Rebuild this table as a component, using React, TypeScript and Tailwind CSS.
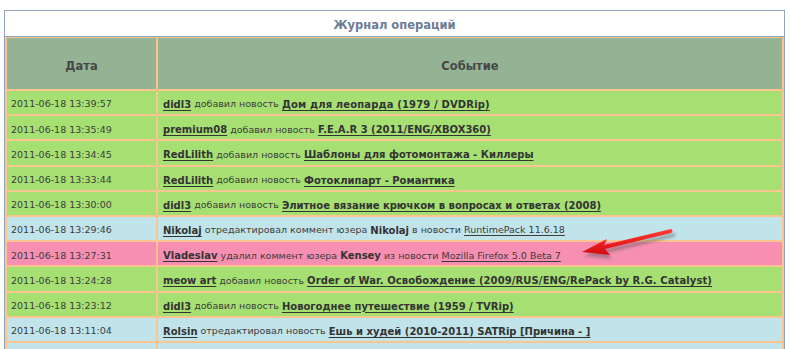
import React from "react";

type Part = { t: string; b?: boolean; u?: boolean; k?: string };
type Row = { d: string; c: "g" | "b" | "p"; parts: Part[] };

const added = (user: string, title: string, k?: string): Part[] => [
  { t: user, b: true, u: true },
  { t: " добавил новость " },
  { t: title, b: true, u: true, k },
];

const rows: Row[] = [
  { d: "2011-06-18 13:39:57", c: "g", parts: added("didl3", "Дом для леопарда (1979 / DVDRip)", "tracking-[0.15px]") },
  { d: "2011-06-18 13:35:49", c: "g", parts: added("premium08", "F.E.A.R 3 (2011/ENG/XBOX360)") },
  { d: "2011-06-18 13:34:45", c: "g", parts: added("RedLilith", "Шаблоны для фотомонтажа - Киллеры") },
  { d: "2011-06-18 13:33:44", c: "g", parts: added("RedLilith", "Фотоклипарт - Романтика") },
  { d: "2011-06-18 13:30:00", c: "g", parts: added("didl3", "Элитное вязание крючком в вопросах и ответах (2008)") },
  {
    d: "2011-06-18 13:29:46",
    c: "b",
    parts: [
      { t: "Nikolaj", b: true, u: true },
      { t: " отредактировал коммент юзера " },
      { t: "Nikolaj", b: true },
      { t: " в новости " },
      { t: "RuntimePack 11.6.18", u: true },
    ],
  },
  {
    d: "2011-06-18 13:27:31",
    c: "p",
    parts: [
      { t: "Vladeslav", b: true, u: true },
      { t: " удалил коммент юзера " },
      { t: "Kensey", b: true },
      { t: " из новости " },
      { t: "Mozilla Firefox 5.0 Beta 7", u: true },
    ],
  },
  {
    d: "2011-06-18 13:24:28",
    c: "g",
    parts: added("meow art", "Order of War. Освобождение (2009/RUS/ENG/RePack by R.G. Catalyst)", "tracking-[0.1px]"),
  },
  { d: "2011-06-18 13:23:12", c: "g", parts: added("didl3", "Новогоднее путешествие (1959 / TVRip)") },
  {
    d: "2011-06-18 13:11:04",
    c: "b",
    parts: [
      { t: "Rolsin", b: true, u: true },
      { t: " отредактировал новость " },
      { t: "Ешь и худей (2010-2011) SATRip [Причина - ]", b: true, u: true },
    ],
  },
  { d: "", c: "b", parts: [] },
];

const bg = (c: Row["c"]) =>
  c === "g" ? "bg-[#a6e073]" : c === "b" ? "bg-[#c1e4ea]" : "bg-[#f78fb2]";

export default function App() {
  return (
    <div
      className="relative w-[790px] h-[349px] overflow-hidden bg-white pt-[10px] pl-[4px]"
      style={{ fontFamily: '"DejaVu Sans", "Noto Sans", sans-serif' }}
    >
      <div className="w-[781px] border border-[#8ea4bf] bg-white">
        <div className="h-[26px] pt-[5px] flex items-center justify-center border-b border-[#8ea4bf] text-[11.5px] font-bold text-[#6c7c95]">
          Журнал операций
        </div>
        <div className="bg-[#fcc48e] pt-[1px] px-[2px] grid grid-cols-[149px_624px] grid-rows-[51px] gap-[2px] auto-rows-[23.2px]">
          <div className="bg-[#93b394] pt-[6px] flex items-center justify-center text-[11.5px] font-bold text-[#474747]">
            Дата
          </div>
          <div className="bg-[#93b394] pt-[6px] flex items-center justify-center text-[11.5px] font-bold text-[#474747]">
            Событие
          </div>
          {rows.map((r, i) => (
            <React.Fragment key={i}>
              <div className={`${bg(r.c)} flex items-center pt-[4px] pl-[4px] text-[9.5px] text-[#3c3c3c] whitespace-nowrap`}>
                {r.d}
              </div>
              <div className={`${bg(r.c)} flex items-center pt-[4px] pl-[5px] text-[9.5px] text-[#3c3c3c] whitespace-pre`}>
                {r.parts.map((p, j) => (
                  <span
                    key={j}
                    className={`${p.b ? "font-bold text-[#333333] text-[10px]" : ""} ${p.u ? "underline underline-offset-2" : ""} ${p.k ?? ""}`}
                  >
                    {p.t}
                  </span>
                ))}
              </div>
            </React.Fragment>
          ))}
        </div>
      </div>
      <svg className="absolute left-0 top-0 pointer-events-none" width="790" height="349">
        <defs>
          <filter id="sh" x="-20%" y="-50%" width="140%" height="200%">
            <feGaussianBlur stdDeviation="1.6" />
          </filter>
          <linearGradient id="rg" x1="0" y1="0" x2="0" y2="1">
            <stop offset="0" stopColor="#ff3a32" />
            <stop offset="1" stopColor="#d40a10" />
          </linearGradient>
        </defs>
        <path
          d="M584,256 L609,243 L606,249 L674,233 Q677,235 674,237 L607,253 L612,259 Z"
          fill="#555"
          opacity="0.45"
          filter="url(#sh)"
        />
        <path
          d="M582,252 L607,239 L604,245 L671,229 Q674,231 671,233 L605,249 L610,255 Z"
          fill="url(#rg)"
        />
      </svg>
    </div>
  );
}
